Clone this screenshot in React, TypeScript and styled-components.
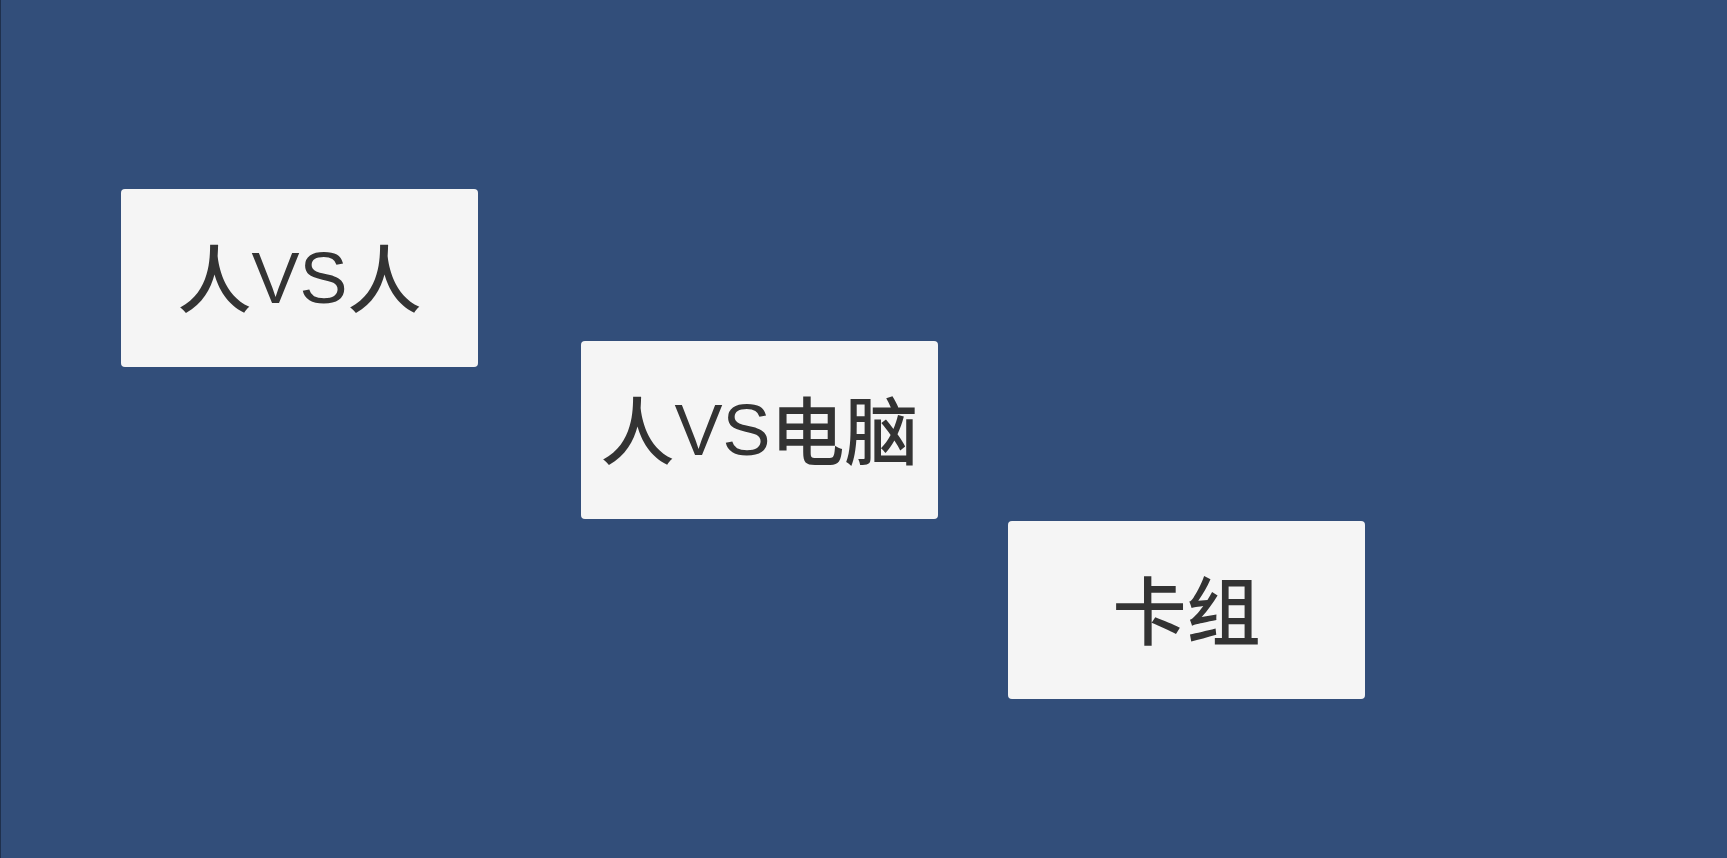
import React from 'react';
import styled, { createGlobalStyle } from 'styled-components';

const GlobalStyle = createGlobalStyle`
  html, body {
    margin: 0;
    padding: 0;
    height: 100%;
    background: #324e7a;
  }
  #root {
    height: 100%;
  }
`;

const Scene = styled.div`
  display: flex;
  align-items: flex-start;
  height: 100vh;
  box-sizing: border-box;
  padding-left: 120px;
  background: #324e7a;
  border-left: 1px solid #1f304d;
  overflow: hidden;
`;

const MenuButton = styled.button<{ $left: number; $top: number }>`
  flex: 0 0 auto;
  width: 357px;
  height: 178px;
  margin-left: ${p => p.$left}px;
  margin-top: ${p => p.$top}px;
  padding: 0;
  border: none;
  border-radius: 4px;
  background: #f5f5f5;
  color: #333333;
  font-family: "Liberation Sans", Arial, sans-serif;
  font-size: 72px;
  line-height: 1;
  display: flex;
  align-items: center;
  justify-content: center;
  cursor: pointer;

  &:hover {
    background: #ffffff;
  }
`;

// Han characters are set in the CJK face, Latin stays in the Arial-width face
const Han = styled.span`
  font-family: "Noto Sans CJK SC", sans-serif;
  font-size: 74px;
  font-weight: 500;
  margin-bottom: 7px;
`;

const modes = [
  { label: '人VS人', left: 0, top: 189 },
  { label: '人VS电脑', left: 103, top: 341 },
  { label: '卡组', left: 70, top: 521 },
];

function Label({ text }: { text: string }) {
  const parts = text.split(/([A-Za-z]+)/).filter(Boolean);
  return (
    <>
      {parts.map((p, i) =>
        /[A-Za-z]/.test(p) ? <span key={i}>{p}</span> : <Han key={i}>{p}</Han>
      )}
    </>
  );
}

export default function App() {
  return (
    <>
      <GlobalStyle />
      <Scene>
        {modes.map(m => (
          <MenuButton key={m.label} $left={m.left} $top={m.top}>
            <Label text={m.label} />
          </MenuButton>
        ))}
      </Scene>
    </>
  );
}
